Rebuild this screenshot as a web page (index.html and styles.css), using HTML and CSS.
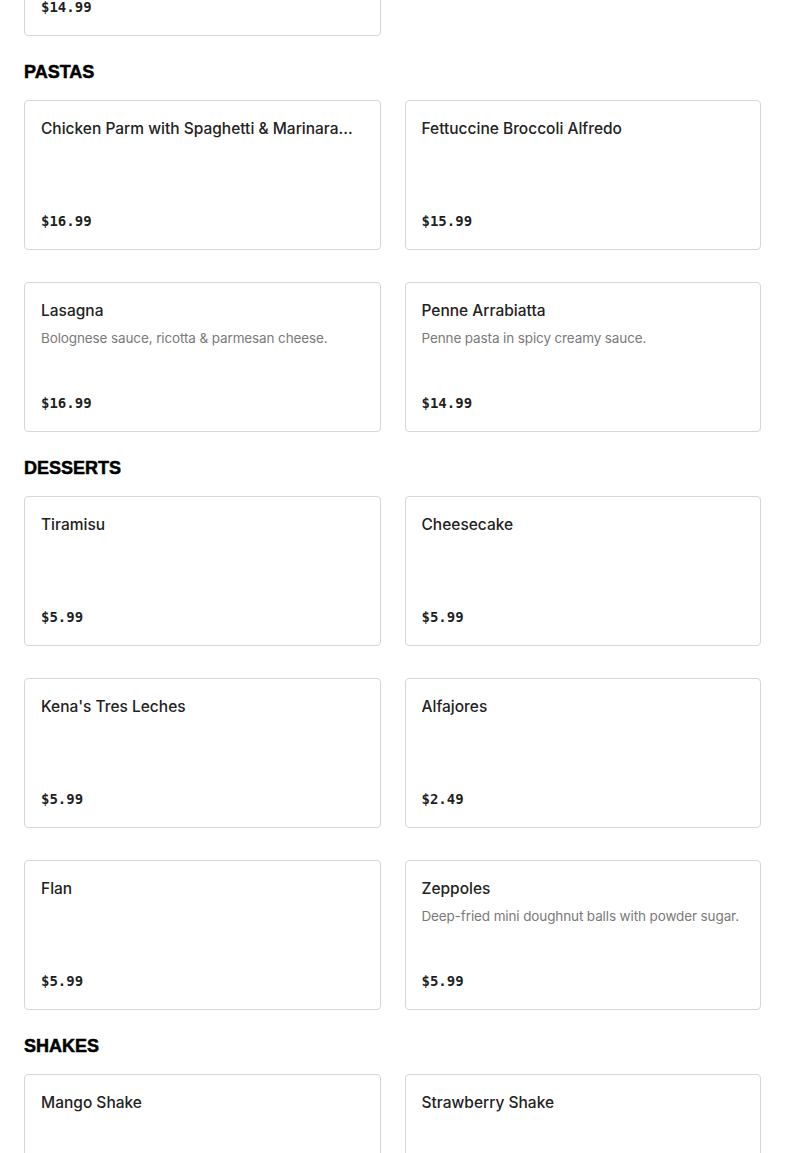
FILE: index.html
```html
<!DOCTYPE html>
<html lang="en">
<head>
<meta charset="utf-8">
<title>Menu</title>
<link rel="stylesheet" href="styles.css">
</head>
<body>
<main class="menu">
  <section class="section section-first">
    <div class="grid">
      <article class="card">
        <h3 class="card-name">Baked Ziti</h3>
        <p class="card-price">$14.99</p>
      </article>
    </div>
  </section>

  <section class="section">
    <h2 class="section-title">PASTAS</h2>
    <div class="grid">
      <article class="card">
        <h3 class="card-name">Chicken Parm with Spaghetti &amp; Marinara...</h3>
        <p class="card-price">$16.99</p>
      </article>
      <article class="card">
        <h3 class="card-name">Fettuccine Broccoli Alfredo</h3>
        <p class="card-price">$15.99</p>
      </article>
      <article class="card">
        <h3 class="card-name">Lasagna</h3>
        <p class="card-desc">Bolognese sauce, ricotta &amp; parmesan cheese.</p>
        <p class="card-price">$16.99</p>
      </article>
      <article class="card">
        <h3 class="card-name">Penne Arrabiatta</h3>
        <p class="card-desc">Penne pasta in spicy creamy sauce.</p>
        <p class="card-price">$14.99</p>
      </article>
    </div>
  </section>

  <section class="section">
    <h2 class="section-title">DESSERTS</h2>
    <div class="grid">
      <article class="card">
        <h3 class="card-name">Tiramisu</h3>
        <p class="card-price">$5.99</p>
      </article>
      <article class="card">
        <h3 class="card-name">Cheesecake</h3>
        <p class="card-price">$5.99</p>
      </article>
      <article class="card">
        <h3 class="card-name">Kena's Tres Leches</h3>
        <p class="card-price">$5.99</p>
      </article>
      <article class="card">
        <h3 class="card-name">Alfajores</h3>
        <p class="card-price">$2.49</p>
      </article>
      <article class="card">
        <h3 class="card-name">Flan</h3>
        <p class="card-price">$5.99</p>
      </article>
      <article class="card">
        <h3 class="card-name">Zeppoles</h3>
        <p class="card-desc">Deep-fried mini doughnut balls with powder sugar.</p>
        <p class="card-price">$5.99</p>
      </article>
    </div>
  </section>

  <section class="section">
    <h2 class="section-title">SHAKES</h2>
    <div class="grid">
      <article class="card">
        <h3 class="card-name">Mango Shake</h3>
        <p class="card-price">$5.99</p>
      </article>
      <article class="card">
        <h3 class="card-name">Strawberry Shake</h3>
        <p class="card-price">$5.99</p>
      </article>
    </div>
  </section>
</main>
</body>
</html>
```

FILE: styles.css
```css
* {
  box-sizing: border-box;
}

html, body {
  margin: 0;
  padding: 0;
  background: #ffffff;
}

body {
  font-family: Inter, "Liberation Sans", Arial, sans-serif;
  color: #1f1f1f;
}

.menu {
  padding: 0 24px;
  margin-top: -114px;
  display: flex;
  flex-direction: column;
  gap: 24px;
}

.section-title {
  margin: 0 0 17px;
  padding-top: 1px;
  font-family: "Liberation Sans", Arial, sans-serif;
  font-weight: 700;
  font-size: 18px;
  line-height: 22px;
  color: #000000;
  -webkit-text-stroke: 0.5px #000000;
}

.grid {
  display: grid;
  grid-template-columns: 1fr 1fr;
  column-gap: 24px;
  row-gap: 32px;
}

.card {
  height: 150px;
  border: 1px solid #d6d6d6;
  border-radius: 4px;
  padding: 16px 16px 15px;
  display: flex;
  flex-direction: column;
  min-width: 0;
  background: #fff;
}

.card-name {
  margin: 0;
  font-size: 15.5px;
  font-weight: 500;
  line-height: 24px;
  color: #222222;
  white-space: nowrap;
  overflow: hidden;
  text-overflow: ellipsis;
}

.card-desc {
  margin: 3px 0 0;
  font-size: 13.5px;
  letter-spacing: -0.12px;
  line-height: 24px;
  color: #7a7a7a;
}

.card-price {
  margin: auto 0 0;
  font-family: "DejaVu Sans Mono", "Liberation Mono", monospace;
  font-weight: 700;
  font-size: 14px;
  line-height: 26px;
  color: #1f1f1f;
}
```
